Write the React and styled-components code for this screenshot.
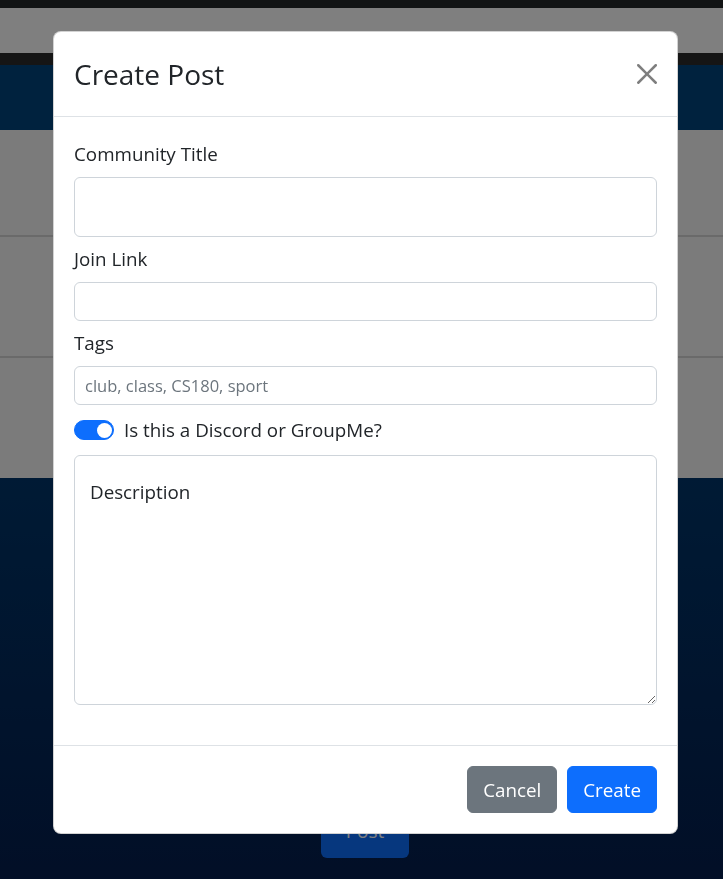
import React from "react";
import styled, { createGlobalStyle } from "styled-components";

const GlobalStyle = createGlobalStyle`
  * {
    box-sizing: border-box;
  }
  html,
  body {
    margin: 0;
    padding: 0;
    height: 100%;
    overflow: hidden;
  }
  body {
    font-family: "Open Sans", "Noto Sans", sans-serif;
    color: #212529;
  }
`;

// page behind the modal
const Page = styled.div`
  height: 879px;
  display: flex;
  flex-direction: column;
`;

const Strip = styled.div`
  height: ${(p) => p.$h}px;
  background: ${(p) => p.$bg};
`;

const ListSection = styled.div`
  display: flex;
  flex-direction: column;
  background: #f6f6f6;
`;

const ListRow = styled.div`
  height: ${(p) => p.$h}px;
  border-top: ${(p) => (p.$line ? "2px solid #d4d4d4" : "none")};
`;

const BottomSection = styled.div`
  flex: 1;
  display: flex;
  align-items: flex-end;
  justify-content: center;
  padding: 0 0 21px 7px;
  background: linear-gradient(180deg, #00356a 0%, #041e4e 100%);
`;

const PostButton = styled.button`
  width: 88px;
  height: 54px;
  border: none;
  border-radius: 6px;
  background: #0d6efd;
  color: #fff;
  font-family: inherit;
  font-size: 19px;
`;

// modal
const Backdrop = styled.div`
  position: fixed;
  inset: 0;
  background: rgba(0, 0, 0, 0.5);
  display: flex;
  align-items: flex-start;
  justify-content: flex-start;
  padding: 31px 0 0 53px;
`;

const ModalCard = styled.div`
  width: 625px;
  background: #fff;
  border: 1px solid rgba(0, 0, 0, 0.175);
  border-radius: 8px;
  display: flex;
  flex-direction: column;
`;

const ModalHeader = styled.div`
  height: 85px;
  display: flex;
  align-items: center;
  padding: 0 20px;
  border-bottom: 1px solid #dee2e6;
`;

const ModalTitle = styled.h4`
  margin: 2px 0 0;
  font-size: 28px;
  font-weight: 400;
  line-height: 1.2;
`;

const CloseButton = styled.button`
  margin-left: auto;
  width: 20px;
  height: 20px;
  padding: 0;
  border: none;
  background: none;
  opacity: 0.5;
  display: flex;
  cursor: pointer;
`;

const ModalBody = styled.div`
  display: flex;
  flex-direction: column;
  padding: 20px;
`;

const FieldLabel = styled.label`
  display: block;
  margin: 2px 0 8px;
  font-size: 18.8px;
  line-height: 30px;
`;

const TextInput = styled.input`
  display: block;
  width: 100%;
  height: ${(p) => (p.$tall ? 60 : 39)}px;
  margin-bottom: 5px;
  padding: 5px 10px;
  border: 1px solid #ced4da;
  border-radius: 6px;
  font-family: inherit;
  font-size: 16.5px;
  color: #212529;

  &::placeholder {
    color: #6c757d;
  }
`;

const SwitchRow = styled.div`
  display: flex;
  align-items: flex-start;
  gap: 10px;
  height: 30px;
  margin: 5px 0 10px;
`;

const Toggle = styled.span`
  position: relative;
  flex: none;
  width: 40px;
  height: 20px;
  margin-top: 5px;
  border: 1px solid #0d6efd;
  border-radius: 10px;
  background: #0d6efd;

  &::after {
    content: "";
    position: absolute;
    top: 1.5px;
    right: 1.5px;
    width: 15px;
    height: 15px;
    border-radius: 50%;
    background: #fff;
  }
`;

const SwitchText = styled.span`
  font-size: 18.8px;
  line-height: 30px;
`;

const DescriptionArea = styled.textarea`
  display: block;
  width: 100%;
  height: 250px;
  margin-bottom: 20px;
  padding: 21px 15px;
  border: 1px solid #ced4da;
  border-radius: 6px;
  font-family: inherit;
  font-size: 18.8px;
  line-height: 30px;
  color: #212529;
  resize: vertical;

  &::placeholder {
    color: #212529;
    opacity: 1;
  }
`;

const ModalFooter = styled.div`
  display: flex;
  justify-content: flex-end;
  gap: 10px;
  padding: 20px;
  border-top: 1px solid #dee2e6;
`;

const Button = styled.button`
  padding: 7.5px 15px;
  border: 1px solid ${(p) => (p.$variant === "primary" ? "#0d6efd" : "#6c757d")};
  border-radius: 6px;
  background: ${(p) => (p.$variant === "primary" ? "#0d6efd" : "#6c757d")};
  color: #fff;
  font-family: inherit;
  font-size: 18.8px;
  line-height: 30px;
  cursor: pointer;
`;

const CloseIcon = () => (
  <svg width="20" height="20" viewBox="0 0 16 16" fill="#000">
    <path d="M.293.293a1 1 0 0 1 1.414 0L8 6.586 14.293.293a1 1 0 1 1 1.414 1.414L9.414 8l6.293 6.293a1 1 0 0 1-1.414 1.414L8 9.414l-6.293 6.293a1 1 0 0 1-1.414-1.414L6.586 8 .293 1.707a1 1 0 0 1 0-1.414z" />
  </svg>
);

const App = () => {
  return (
    <>
      <GlobalStyle />
      <Page>
        <Strip $h={8} $bg="#232629" />
        <Strip $h={45} $bg="#ffffff" />
        <Strip $h={12} $bg="#2a2a2a" />
        <Strip $h={65} $bg="#00457c" />
        <ListSection>
          <ListRow $h={105} />
          <ListRow $h={121} $line />
          <ListRow $h={122} $line />
        </ListSection>
        <BottomSection>
          <PostButton>Post</PostButton>
        </BottomSection>
      </Page>

      <Backdrop>
        <ModalCard>
          <ModalHeader>
            <ModalTitle>Create Post</ModalTitle>
            <CloseButton aria-label="Close">
              <CloseIcon />
            </CloseButton>
          </ModalHeader>

          <ModalBody>
            <FieldLabel>Community Title</FieldLabel>
            <TextInput $tall type="text" />

            <FieldLabel>Join Link</FieldLabel>
            <TextInput type="text" />

            <FieldLabel>Tags</FieldLabel>
            <TextInput type="text" placeholder="club, class, CS180, sport" />

            <SwitchRow>
              <Toggle />
              <SwitchText>Is this a Discord or GroupMe?</SwitchText>
            </SwitchRow>

            <DescriptionArea placeholder="Description" />
          </ModalBody>

          <ModalFooter>
            <Button $variant="secondary">Cancel</Button>
            <Button $variant="primary">Create</Button>
          </ModalFooter>
        </ModalCard>
      </Backdrop>
    </>
  );
};

export default App;
